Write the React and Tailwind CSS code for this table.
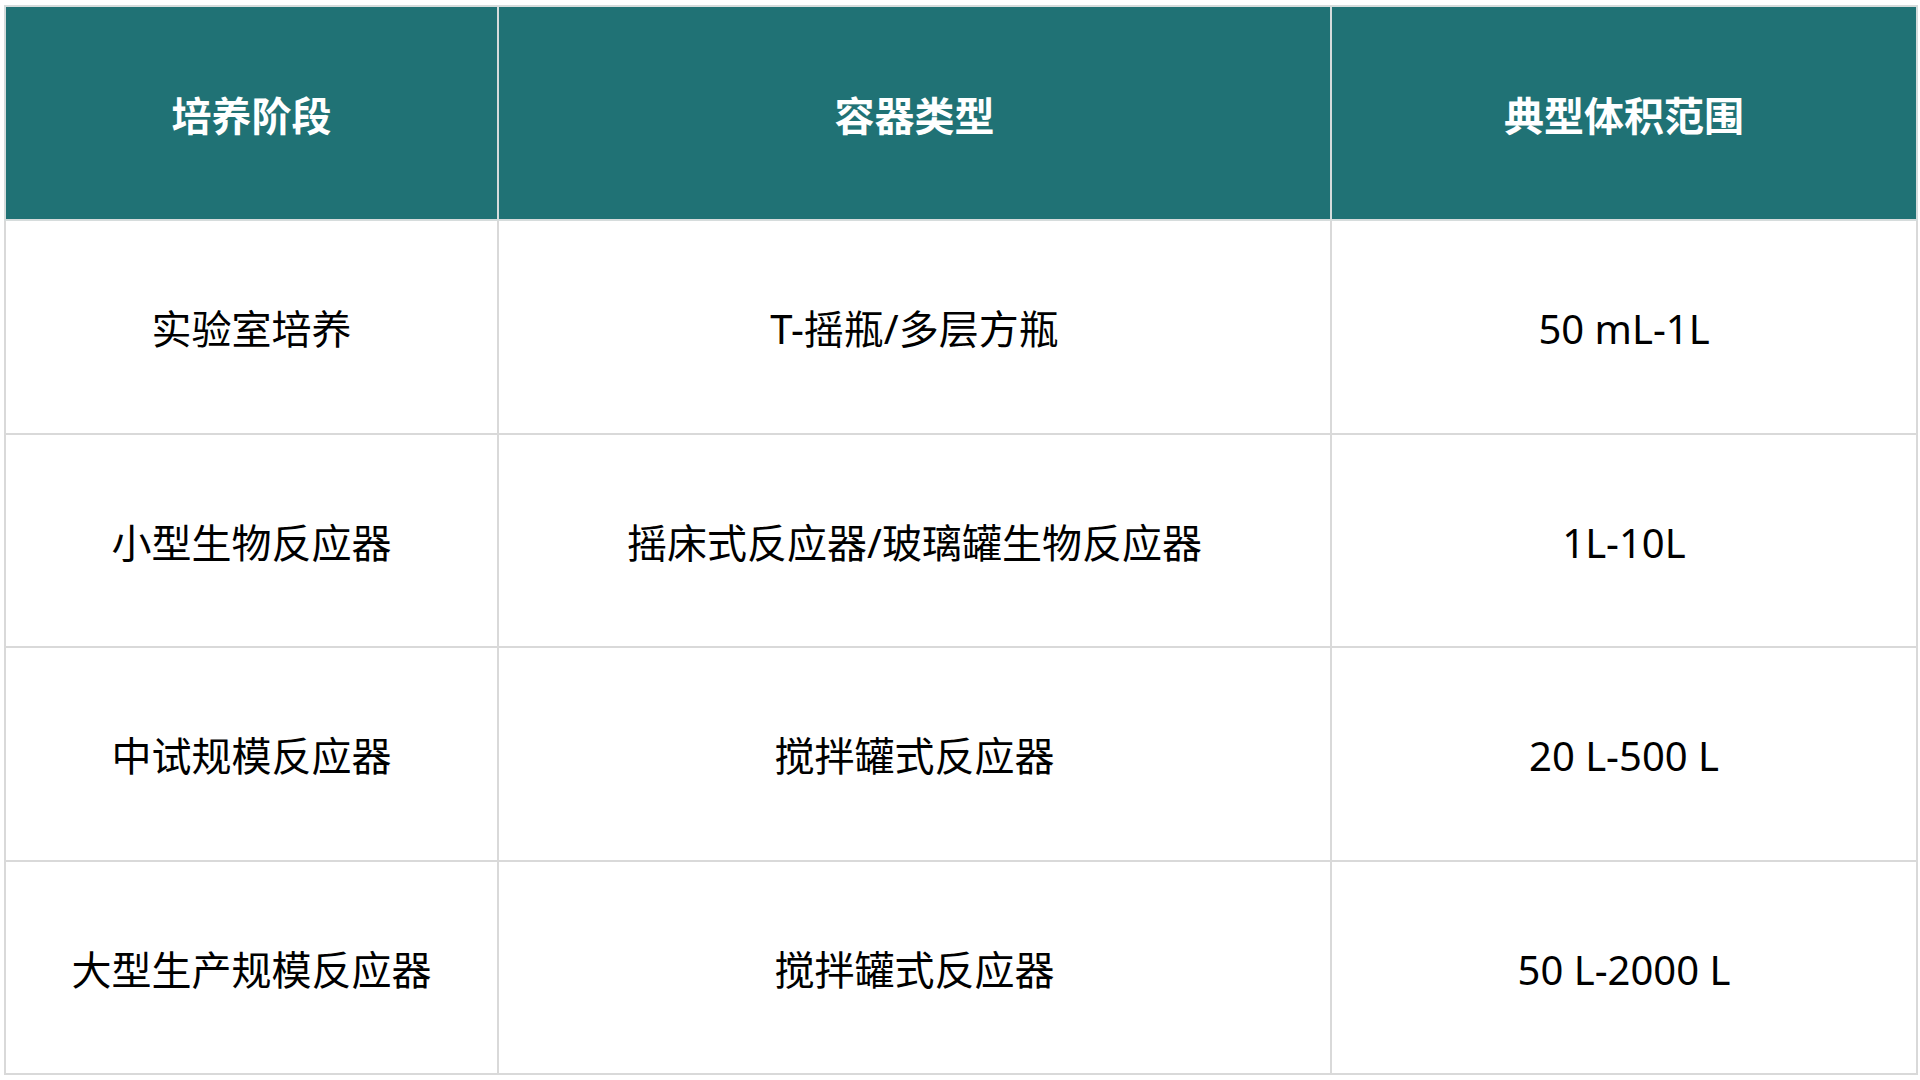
export default function App() {
  const rows = [
    ["实验室培养", "T-摇瓶/多层方瓶", "50 mL-1L"],
    ["小型生物反应器", "摇床式反应器/玻璃罐生物反应器", "1L-10L"],
    ["中试规模反应器", "搅拌罐式反应器", "20 L-500 L"],
    ["大型生产规模反应器", "搅拌罐式反应器", "50 L-2000 L"],
  ];
  const font = { fontFamily: '"Noto Sans", "Noto Sans CJK SC", sans-serif' };
  return (
    <div className="w-[1920px] h-[1080px] bg-white pl-[4px] pr-[2px] pt-[5px]" style={font}>
      <table className="w-full border-collapse table-fixed">
        <colgroup>
          <col className="w-[493px]" />
          <col className="w-[833px]" />
          <col />
        </colgroup>
        <thead>
          <tr className="h-[214px] bg-[#207275]">
            {["培养阶段", "容器类型", "典型体积范围"].map((h) => (
              <th
                key={h}
                className="border-2 border-[#d6dcdc] text-white font-bold text-[40px] text-center align-middle pt-[5px]"
              >
                {h}
              </th>
            ))}
          </tr>
        </thead>
        <tbody>
          {rows.map((r, i) => (
            <tr key={i} className="h-[213.6px]">
              {r.map((c, j) => (
                <td
                  key={j}
                  className="border-2 border-[#d9d9d9] text-black text-[40px] text-center align-middle pt-[5px]"
                >
                  {c}
                </td>
              ))}
            </tr>
          ))}
        </tbody>
      </table>
    </div>
  );
}
